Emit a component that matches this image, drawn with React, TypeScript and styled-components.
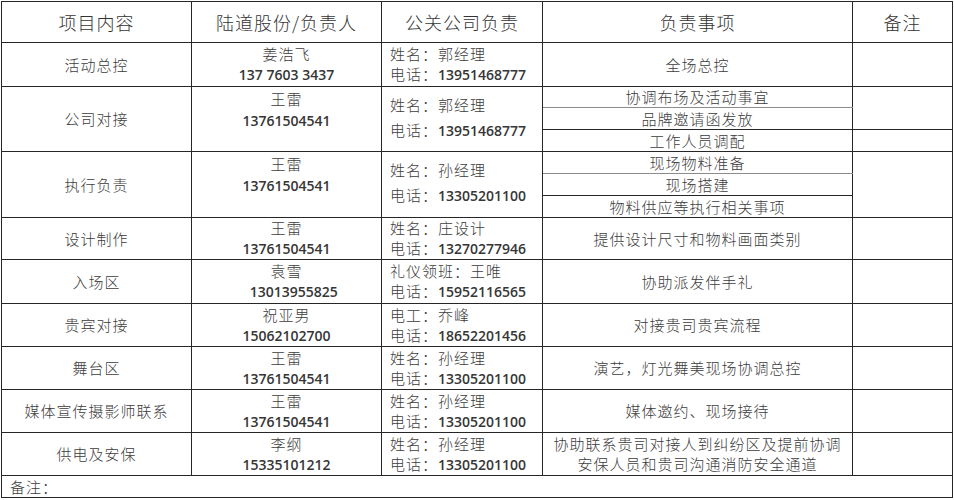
import React from "react";
import styled, { createGlobalStyle } from "styled-components";

const GlobalStyle = createGlobalStyle`
  html, body {
    margin: 0;
    padding: 0;
    background: #ffffff;
  }
  body {
    font-family: "Noto Sans CJK SC", "Noto Sans", sans-serif;
    color: #3c3c3c;
  }
`;

const LINE = "#262626";
const SOFT_LINE = "#8c8c8c";

const Page = styled.div`
  padding: 1px 0 0 1px;
  width: 954px;
  height: 500px;
  box-sizing: border-box;
  overflow: hidden;
`;

const Sheet = styled.table`
  border-collapse: collapse;
  table-layout: fixed;
  width: 952px;
  font-size: 15px;
  font-weight: 300;
  letter-spacing: 1px;
`;

const Row = styled.tr<{ $h: number }>`
  height: ${(p) => p.$h}px;
`;

const HeadCell = styled.th`
  border: 1px solid ${LINE};
  font-size: 18px;
  font-weight: 300;
  letter-spacing: 1px;
  text-align: center;
  vertical-align: middle;
  padding: 0;
  color: #333;
`;

const Cell = styled.td<{
  $align?: "left" | "center";
  $valign?: "top" | "middle";
  $lh?: number;
  $soft?: boolean;
}>`
  border: 1px solid ${LINE};
  ${(p) => (p.$soft ? `border-bottom-color: ${SOFT_LINE};` : "")}
  text-align: ${(p) => p.$align || "center"};
  vertical-align: ${(p) => p.$valign || "middle"};
  line-height: ${(p) => p.$lh || 20}px;
  padding: ${(p) =>
    p.$align === "left" ? "0 0 0 8px" : p.$valign === "top" ? "1px 0 0" : "0"};
  white-space: nowrap;
  overflow: hidden;
`;

const NoteCell = styled.td`
  border: 1px solid ${LINE};
  border-top-color: #6e6e6e;
  padding: 0 0 0 8px;
  line-height: 20px;
  vertical-align: middle;
`;

const Line = styled.div`
  display: block;
`;

const Spacer = styled.div`
  height: 4px;
`;

const Num = styled.span`
  font-family: "Open Sans", "Liberation Sans", sans-serif;
  font-weight: 600;
  font-size: 14px;
  letter-spacing: 0;
  color: #363636;
`;

type Entry = {
  item: string;
  name: string;
  phone: string;
  label: string;
  contact: string;
  tel: string;
  duties: string[];
  heights: number[];
  notes?: number[];
};

const entries: Entry[] = [
  {
    item: "活动总控",
    name: "姜浩飞",
    phone: "137 7603 3437",
    label: "姓名",
    contact: "郭经理",
    tel: "13951468777",
    duties: ["全场总控"],
    heights: [44],
  },
  {
    item: "公司对接",
    name: "王雷",
    phone: "13761504541",
    label: "姓名",
    contact: "郭经理",
    tel: "13951468777",
    duties: ["协调布场及活动事宜", "品牌邀请函发放", "工作人员调配"],
    heights: [21, 22, 22],
    notes: [2, 1],
  },
  {
    item: "执行负责",
    name: "王雷",
    phone: "13761504541",
    label: "姓名",
    contact: "孙经理",
    tel: "13305201100",
    duties: ["现场物料准备", "现场搭建", "物料供应等执行相关事项"],
    heights: [22, 22, 22],
    notes: [3],
  },
  {
    item: "设计制作",
    name: "王雷",
    phone: "13761504541",
    label: "姓名",
    contact: "庄设计",
    tel: "13270277946",
    duties: ["提供设计尺寸和物料画面类别"],
    heights: [42],
  },
  {
    item: "入场区",
    name: "袁雪",
    phone: "\u00a0\u00a0\u00a0\u00a013013955825",
    label: "礼仪领班",
    contact: "王唯",
    tel: "15952116565",
    duties: ["协助派发伴手礼"],
    heights: [44],
  },
  {
    item: "贵宾对接",
    name: "祝亚男",
    phone: "15062102700",
    label: "电工",
    contact: "乔峰",
    tel: "18652201456",
    duties: ["对接贵司贵宾流程"],
    heights: [43],
  },
  {
    item: "舞台区",
    name: "王雷",
    phone: "13761504541",
    label: "姓名",
    contact: "孙经理",
    tel: "13305201100",
    duties: ["演艺，灯光舞美现场协调总控"],
    heights: [43],
  },
  {
    item: "媒体宣传摄影师联系",
    name: "王雷",
    phone: "13761504541",
    label: "姓名",
    contact: "孙经理",
    tel: "13305201100",
    duties: ["媒体邀约、现场接待"],
    heights: [43],
  },
  {
    item: "供电及安保",
    name: "李纲",
    phone: "15335101212",
    label: "姓名",
    contact: "孙经理",
    tel: "13305201100",
    duties: ["协助联系贵司对接人到纠纷区及提前协调\n安保人员和贵司沟通消防安全通道"],
    heights: [43],
  },
];

const EntryRows = ({ entry }: { entry: Entry }) => {
  const span = entry.duties.length;
  const tall = span > 1;
  const notes = entry.notes || [1];

  // which sub row starts a new 备注 cell
  const noteStarts: Record<number, number> = {};
  let at = 0;
  notes.forEach((n) => {
    noteStarts[at] = n;
    at += n;
  });

  return (
    <>
      {entry.duties.map((duty, i) => (
        <Row key={i} $h={entry.heights[i]}>
          {i === 0 && (
            <>
              <Cell rowSpan={span}>{entry.item}</Cell>
              <Cell rowSpan={span} $valign={tall ? "top" : "middle"} $lh={tall ? 21 : 20}>
                <Line>{entry.name}</Line>
                <Line>
                  <Num>{entry.phone}</Num>
                </Line>
              </Cell>
              <Cell rowSpan={span} $align="left" $lh={tall ? 25 : 20}>
                <Line>
                  {entry.label}：{entry.contact}
                </Line>
                <Line>
                  电话：<Num>{entry.tel}</Num>
                </Line>
                {tall && <Spacer />}
              </Cell>
            </>
          )}
          <Cell $soft={tall && i === 0}>
            {duty.split("\n").map((d, k) => (
              <Line key={k}>{d}</Line>
            ))}
          </Cell>
          {noteStarts[i] !== undefined && <Cell rowSpan={noteStarts[i]} />}
        </Row>
      ))}
    </>
  );
};

const App = () => {
  return (
    <Page>
      <GlobalStyle />
      <Sheet>
        <colgroup>
          <col style={{ width: 190 }} />
          <col style={{ width: 190 }} />
          <col style={{ width: 161 }} />
          <col style={{ width: 310 }} />
          <col style={{ width: 100 }} />
        </colgroup>
        <tbody>
          <Row $h={41}>
            <HeadCell>项目内容</HeadCell>
            <HeadCell>陆道股份/负责人</HeadCell>
            <HeadCell>公关公司负责</HeadCell>
            <HeadCell>负责事项</HeadCell>
            <HeadCell>备注</HeadCell>
          </Row>
          {entries.map((e, i) => (
            <EntryRows key={i} entry={e} />
          ))}
          <Row $h={22}>
            <NoteCell colSpan={5}>备注：</NoteCell>
          </Row>
        </tbody>
      </Sheet>
    </Page>
  );
};

export default App;
